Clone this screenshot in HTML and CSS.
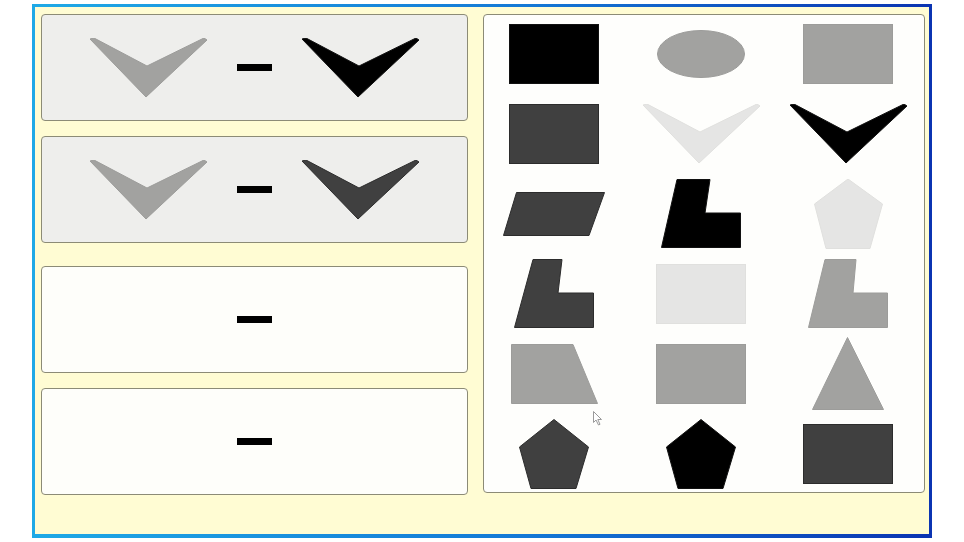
FILE: index.html
```html
<!doctype html>
<html><head><meta charset="utf-8"/><meta name="viewport" content="width=device-width, initial-scale=1"/>
<link rel="stylesheet" href="styles.css">
<title>도형 짝 맞추기</title>
</head>
<body>
	<div class="frame">

		<!-- left side : answer rows -->
		<div class="rows">
			<div class="pair">
				<div class="row filled">
					<svg class="chev" viewBox="0 0 117 60"><polygon class="grey" points="0,1 4,0 57,28 114,0 117,2 56,59"/></svg>
					<span class="minus"></span>
					<svg class="chev" viewBox="0 0 117 60"><polygon class="black" points="0,1 4,0 57,28 114,0 117,2 56,59"/></svg>
				</div>
				<div class="row filled">
					<svg class="chev" viewBox="0 0 117 60"><polygon class="grey" points="0,1 4,0 57,28 114,0 117,2 56,59"/></svg>
					<span class="minus"></span>
					<svg class="chev" viewBox="0 0 117 60"><polygon class="dark" points="0,1 4,0 57,28 114,0 117,2 56,59"/></svg>
				</div>
			</div>
			<div class="pair">
				<div class="row"><span class="minus"></span></div>
				<div class="row"><span class="minus"></span></div>
			</div>
		</div>

		<!-- right side : shape board -->
		<div class="board">
			<div class="cell"><svg width="90" height="60"><rect class="black" x="0.5" y="0.5" width="89" height="59"/></svg></div>
			<div class="cell"><svg width="88" height="48"><ellipse class="grey" cx="44" cy="24" rx="43.5" ry="23.5"/></svg></div>
			<div class="cell"><svg width="90" height="60"><rect class="grey" x="0.5" y="0.5" width="89" height="59"/></svg></div>

			<div class="cell"><svg width="90" height="60"><rect class="dark" x="0.5" y="0.5" width="89" height="59"/></svg></div>
			<div class="cell"><svg width="117" height="60" viewBox="0 0 117 60"><polygon class="light" points="0,1 4,0 57,28 114,0 117,2 56,59"/></svg></div>
			<div class="cell"><svg width="117" height="60" viewBox="0 0 117 60"><polygon class="black" points="0,1 4,0 57,28 114,0 117,2 56,59"/></svg></div>

			<div class="cell"><svg width="102" height="44"><polygon class="dark" points="13.5,0.5 101.5,0.5 86,43.5 0.5,43.5"/></svg></div>
			<div class="cell"><svg width="80" height="69"><polygon class="black" points="16,0.5 49,0.5 44,34 79.5,34 79.5,68.5 0.5,68.5"/></svg></div>
			<div class="cell"><svg width="69" height="70"><polygon class="light" points="34,0 68.5,25 56,69.5 12,69.5 0.5,25"/></svg></div>

			<div class="cell"><svg width="80" height="69"><polygon class="dark" points="19,0.5 48,0.5 44,34 79.5,34 79.5,68.5 0.5,68.5"/></svg></div>
			<div class="cell"><svg width="90" height="60"><rect class="light" x="0.5" y="0.5" width="89" height="59"/></svg></div>
			<div class="cell"><svg width="80" height="69"><polygon class="grey" points="17,0.5 48,0.5 45,34 79.5,34 79.5,68.5 0.5,68.5"/></svg></div>

			<div class="cell"><svg width="87" height="60"><polygon class="grey" points="0.5,0.5 62,0.5 86.5,59.5 0.5,59.5"/></svg></div>
			<div class="cell"><svg width="90" height="60"><rect class="grey" x="0.5" y="0.5" width="89" height="59"/></svg></div>
			<div class="cell"><svg width="72" height="73"><polygon class="grey" points="35.5,0.5 71.5,72.5 0.5,72.5"/></svg></div>

			<div class="cell"><svg width="70" height="70"><polygon class="dark" points="35,0.5 69.5,28 57,69.5 12,69.5 0.5,28"/></svg></div>
			<div class="cell"><svg width="70" height="70"><polygon class="black" points="35,0.5 69.5,28 57,69.5 12,69.5 0.5,28"/></svg></div>
			<div class="cell"><svg width="90" height="60"><rect class="dark" x="0.5" y="0.5" width="89" height="59"/></svg></div>

			<!-- mouse pointer -->
			<svg class="pointer" width="11" height="15" viewBox="0 0 11 15"><polygon points="0.5,0.5 0.5,11.5 3,9 5.5,14 7,13.3 4.8,8.5 8.5,8.5" fill="#fff" stroke="#9a9a9a" stroke-width="1"/></svg>
		</div>

	</div>
</body>
</html>
```

FILE: styles.css
```css
* { box-sizing:border-box; }
body { margin:0; background-color:white; font-family:"Liberation Sans", Arial, sans-serif; }

.frame { display:flex; gap:15px; width:900px; height:534px; margin:4px 0 0 32px; padding:7px 4px 0 6px;
	background-color:#fffcd3; border:3px solid; border-bottom-width:4px;
	border-image:linear-gradient(to right, #1fa9e6, #1478d6 55%, #0b34b2) 1; }

.rows { display:flex; flex-direction:column; gap:23px; width:427px; }
.pair { display:flex; flex-direction:column; gap:15px; }
.row { display:flex; align-items:center; justify-content:center; gap:30px; height:107px;
	background-color:#fefefa; border:1px solid #8c8b76; border-radius:4px; }
.row.filled { background-color:#eeeeec; }
.chev { width:117px; height:60px; display:block; }
.minus { display:block; width:35px; height:7px; background-color:black; }

.board { position:relative; display:grid; grid-template-columns:repeat(3, 140px); grid-template-rows:repeat(6, 80px);
	align-content:center; column-gap:7px; width:442px; height:479px;
	background-color:#fefefc; border:1px solid #8c8b76; border-radius:4px; }
.cell { display:flex; align-items:center; justify-content:center; }
.cell svg { display:block; }

.black { fill:#000; stroke:#111; stroke-width:1; }
.dark { fill:#404040; stroke:#2c2c2c; stroke-width:1; }
.grey { fill:#a2a2a0; stroke:#9c9c9a; stroke-width:1; }
.light { fill:#e5e5e4; stroke:#e0e0de; stroke-width:1; }

.pointer { position:absolute; left:109px; top:396px; }
```
